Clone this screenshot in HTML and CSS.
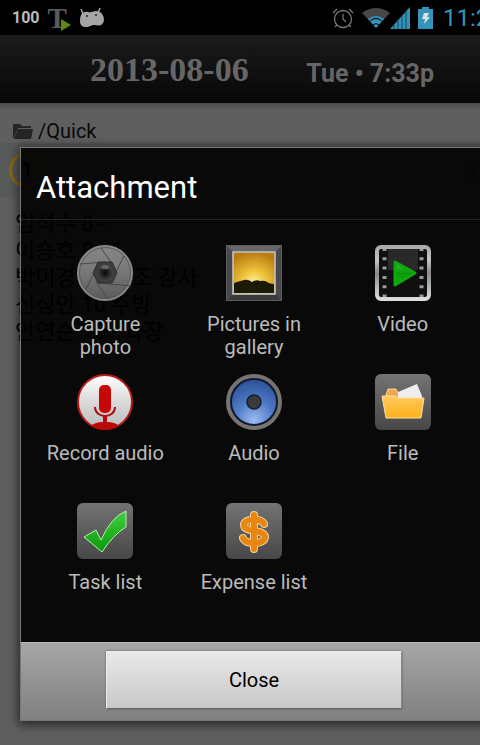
FILE: index.html
```
<!DOCTYPE html>
<html lang="en">
<head>
    <meta charset="UTF-8">
    <meta name="viewport" content="width=device-width, initial-scale=1.0">
    <title>Quick note</title>
    <link rel="stylesheet" href="styles.css">
</head>
<body>

<div class="status-bar">
    <span class="battery-percent">100</span>
    <span class="app-letter">T</span>
    <svg class="android-icon" width="26" height="20" viewBox="0 0 26 20">
        <path d="M4 6 2 1M19 5l2-5" stroke="#a5a5a5" stroke-width="1.5"/>
        <path d="M1 13C1 6 4 3 9 4c3 1 5-1 8-1 5 0 8 4 8 9-1 6-5 6-9 5-4 0-5 2-9 2-4 0-6-2-6-6z" fill="#a5a5a5"/>
        <circle cx="8" cy="8" r="1" fill="#222"/><circle cx="17" cy="7" r="1" fill="#222"/>
    </svg>
    <svg class="alarm-icon" width="22" height="22" viewBox="0 0 22 22" fill="none" stroke="#777" stroke-width="1.3">
        <circle cx="11" cy="12" r="8.5"/>
        <path d="M11 7v5l3 3M1 6l4-4M21 6l-4-4M5 18l-2 2M17 18l2 2"/>
    </svg>
    <svg class="wifi-icon" width="28" height="22" viewBox="0 0 28 22">
        <path d="M0 6Q14-4 28 6L14 21z" fill="#484848"/>
        <path d="M6 12q8-6 16 0l-8 9z" fill="#3592b8"/>
        <path d="M8 14q6-5 12 0M11 18q3-3 6 0" fill="none" stroke="#000"/>
    </svg>
    <svg class="signal-icon" width="20" height="22" viewBox="0 0 20 22">
        <path d="M0 22 20 0v22z" fill="#3592b8"/>
        <path d="M4 22v-5M8 22V12M12 22V8M16 22V3" stroke="#0f4960"/>
    </svg>
    <svg class="battery-icon" width="15" height="22" viewBox="0 0 15 22">
        <path d="M4 0h7v2h4v20H0V2h4z" fill="#3592b8"/>
        <path d="M6 6h5l-2 4h3l-6 7 1-5H4z" fill="#d5e3e8"/>
    </svg>
    <span class="clock">11:24</span>
</div>

<header class="note-header">
    <span class="note-date">2013-08-06</span>
    <span class="note-time">Tue • 7:33p</span>
</header>

<main class="note">
    <div class="note-path">
        <svg width="21" height="16" viewBox="0 0 21 16">
            <path d="M0 15V1h7l2 2h9v2H5L1 15z" fill="#252525"/>
            <path d="M5 6h15l-2 10H1z" fill="#252525"/>
        </svg>
        <span>/Quick</span>
    </div>
    <div class="note-toolbar">
        <span class="note-badge">1</span>
        <span class="note-add">+</span>
    </div>
    <div class="note-text">
        <p>임석수 8 -</p>
        <p>이승호 8 - 6</p>
        <p>박이경 10 보조 강사</p>
        <p>신성안 10 주방</p>
        <p>안연순 10 - 과장</p>
    </div>
</main>

<section class="dialog" role="dialog" aria-labelledby="dialog-title">
    <h1 class="dialog-title" id="dialog-title">Attachment</h1>

    <div class="attachments">
        <button type="button" class="attachment">
            <svg width="56" height="56" viewBox="0 0 56 56">
                <defs>
                    <linearGradient id="lens" x1="0" y1="0" x2="0" y2="1">
                        <stop offset="0" stop-color="#858585"/><stop offset=".4" stop-color="#7c7c7c"/><stop offset="1" stop-color="#5a5a5a"/>
                    </linearGradient>
                    <radialGradient id="pupil">
                        <stop offset="0" stop-color="#050505"/><stop offset=".5" stop-color="#252525"/><stop offset="1" stop-color="#444"/>
                    </radialGradient>
                </defs>
                <circle cx="28" cy="28" r="27" fill="url(#lens)" stroke="#888" stroke-width="2"/>
                <circle cx="28" cy="28" r="25.5" fill="none" stroke="#5c5c5c"/>
                <path d="M24 3 36 20M47 11 39 27M54 41 22 38M31 54 19 37M9 44 17 28M3 19 29 17" stroke="#474747" fill="none"/>
                <path d="M21 17h14l5 11-5 10H21l-5-10z" fill="#3c3c3c" stroke="#303030"/>
                <circle cx="28" cy="28" r="8" fill="url(#pupil)"/>
                <ellipse cx="28" cy="22" rx="4" ry="2" fill="#666"/>
            </svg>
            <span>Capture photo</span>
        </button>

        <button type="button" class="attachment">
            <svg width="56" height="56" viewBox="0 0 56 56">
                <defs>
                    <radialGradient id="sunset" cx=".5" cy=".75" r=".75">
                        <stop offset="0" stop-color="#fff5a0"/><stop offset=".4" stop-color="#f0c43c"/><stop offset="1" stop-color="#b87b10"/>
                    </radialGradient>
                </defs>
                <path d="M0 0h56v56H0z" fill="#48494b"/>
                <path d="M0 0h56l-6 6H6z" fill="#65676a"/>
                <path d="M0 56h56l-6-6H6z" fill="#3a3b3d"/>
                <path d="M.5.5h55v55H.5z" fill="none" stroke="#5c5d5f"/>
                <path d="M7 7h42v42H7z" fill="url(#sunset)" stroke="#c8c8c8" stroke-width="1.5"/>
                <path d="M8 38q6-2 10-3 4-1 8 2 5-3 8-1 5-1 7 1 3 2 7 2v9H8z" fill="#1d1b08"/>
            </svg>
            <span>Pictures in gallery</span>
        </button>

        <button type="button" class="attachment">
            <svg width="56" height="56" viewBox="0 0 56 56">
                <defs>
                    <linearGradient id="chrome" x1="0" y1="0" x2="0" y2="1">
                        <stop offset="0" stop-color="#aaa"/><stop offset=".25" stop-color="#c5c5c5"/><stop offset=".5" stop-color="#888"/><stop offset="1" stop-color="#ddd"/>
                    </linearGradient>
                    <linearGradient id="play" x1="0" y1="0" x2="0" y2="1">
                        <stop offset="0" stop-color="#35c335"/><stop offset=".5" stop-color="#079b07"/><stop offset="1" stop-color="#14ad14"/>
                    </linearGradient>
                </defs>
                <rect x="2" y="2" width="52" height="52" rx="4" fill="#101010" stroke="url(#chrome)" stroke-width="4"/>
                <path d="M13 4h30v21H13z" fill="#292929"/>
                <path d="M9.5 4v48M46.5 4v48" stroke="#999" stroke-width="4" stroke-dasharray="3 6.3" stroke-dashoffset="1"/>
                <path d="M20 17 40 28 20 40z" fill="url(#play)" stroke="#10a810" stroke-width="3" stroke-linejoin="round"/>
            </svg>
            <span>Video</span>
        </button>

        <button type="button" class="attachment">
            <svg width="56" height="56" viewBox="0 0 56 56">
                <defs>
                    <linearGradient id="disc" x1="0" y1="0" x2="0" y2="1">
                        <stop offset="0" stop-color="#fff"/><stop offset=".4" stop-color="#e0e0e0"/><stop offset="1" stop-color="#bbb"/>
                    </linearGradient>
                </defs>
                <circle cx="28" cy="28" r="27" fill="url(#disc)" stroke="#b61c1c" stroke-width="2"/>
                <rect x="22" y="11" width="12" height="28" rx="5" fill="#c80808"/>
                <path d="M18 33c0 12 20 12 20 0" fill="none" stroke="#a51212" stroke-width="2"/>
                <path d="M26 42h4v6q8 0 12 4-14 8-28 0 4-4 12-4z" fill="#b90909"/>
            </svg>
            <span>Record audio</span>
        </button>

        <button type="button" class="attachment">
            <svg width="56" height="56" viewBox="0 0 56 56">
                <defs>
                    <radialGradient id="cone" cx=".5" cy=".85" r=".75">
                        <stop offset="0" stop-color="#9cbcf0"/><stop offset=".5" stop-color="#4f7ac6"/><stop offset="1" stop-color="#2f549c"/>
                    </radialGradient>
                </defs>
                <circle cx="28" cy="28" r="26" fill="url(#cone)" stroke="#77736f" stroke-width="4"/>
                <circle cx="28" cy="28" r="23" fill="none" stroke="#111a2d" stroke-width="2"/>
                <circle cx="28" cy="28" r="7" fill="#3a3a3a" stroke="#171f32" stroke-width="1.5"/>
            </svg>
            <span>Audio</span>
        </button>

        <button type="button" class="attachment">
            <svg width="56" height="56" viewBox="0 0 56 56">
                <defs>
                    <linearGradient id="tile" x1="0" y1="0" x2="0" y2="1">
                        <stop offset="0" stop-color="#737373"/><stop offset="1" stop-color="#474747"/>
                    </linearGradient>
                    <linearGradient id="folder" x1="0" y1="0" x2="0" y2="1">
                        <stop offset="0" stop-color="#ffc860"/><stop offset="1" stop-color="#fbb317"/>
                    </linearGradient>
                </defs>
                <rect width="56" height="56" rx="6" fill="url(#tile)"/>
                <path d="M11 21l2-6h8l2 4h20v7H11z" fill="#efa850" stroke="#ffd699"/>
                <path d="M23 18 42 10l5 12v4H23z" fill="#eee"/>
                <path d="M7 22h13l3 2h26l-3 20H11z" fill="url(#folder)" stroke="#ffe0a0"/>
            </svg>
            <span>File</span>
        </button>

        <button type="button" class="attachment">
            <svg width="56" height="56" viewBox="0 0 56 56">
                <defs>
                    <linearGradient id="tick" x1="0" y1="0" x2="0" y2="1">
                        <stop offset="0" stop-color="#42cf42"/><stop offset="1" stop-color="#079b07"/>
                    </linearGradient>
                </defs>
                <rect width="56" height="56" rx="6" fill="url(#tile)"/>
                <path d="M7 34 19 27l5 10Q34 14 49 8v16Q36 32 25 49z" fill="url(#tick)" stroke="#b8edb8"/>
            </svg>
            <span>Task list</span>
        </button>

        <button type="button" class="attachment">
            <svg width="56" height="56" viewBox="0 0 56 56">
                <rect width="56" height="56" rx="6" fill="url(#tile)"/>
                <g fill="none" stroke-linecap="round">
                    <path d="M28 12v34M38 21c-2-6-20-6-20 1 0 8 21 4 21 12 0 8-20 8-22 1" stroke="#f8d3a2" stroke-width="8"/>
                    <path d="M28 12v34M38 21c-2-6-20-6-20 1 0 8 21 4 21 12 0 8-20 8-22 1" stroke="#e9860f" stroke-width="6"/>
                </g>
            </svg>
            <span>Expense list</span>
        </button>
    </div>

    <div class="dialog-footer">
        <button type="button" class="close-button">Close</button>
    </div>
</section>

</body>
</html>
```
FILE: styles.css
```
* {
    box-sizing: border-box;
}

body {
    position: relative;
    display: flex;
    flex-direction: column;
    min-height: 100vh;
    margin: 0;
    overflow: hidden;
    background-color: #5f5f5f;
    font-family: Roboto, "Noto Sans CJK KR", sans-serif;
}

svg {
    display: block;
    flex: none;
}

/* Status bar */
.status-bar {
    display: flex;
    align-items: center;
    height: 35px;
    padding-left: 12px;
    background-color: #000;
    white-space: nowrap;
}

.battery-percent {
    color: #bbb;
    font-size: 16px;
    font-weight: bold;
}

.app-letter {
    position: relative;
    margin-left: 8px;
    color: #5a5a5a;
    font: bold 29px/32px "Liberation Serif", serif;
}

.app-letter::after {
    content: "";
    position: absolute;
    right: -4px;
    bottom: 3px;
    border-top: 6px solid transparent;
    border-bottom: 6px solid transparent;
    border-left: 10px solid #5c8a0b;
}

.android-icon {
    margin-left: 12px;
}

.alarm-icon {
    margin-left: auto;
}

.wifi-icon {
    margin-left: 8px;
}

.battery-icon {
    margin-left: 8px;
}

.clock {
    width: 37px;
    margin-left: 10px;
    overflow: hidden;
    color: #3592b8;
    font-size: 24px;
}

/* Note header */
.note-header {
    display: flex;
    align-items: center;
    justify-content: space-between;
    height: 68px;
    padding: 2px 46px 0 90px;
    background: linear-gradient(#1b1b1b, #070707);
    color: #666;
    font-size: 25px;
    font-weight: bold;
}

.note-time {
    padding-top: 6px;
}

.note-date {
    font-family: "Liberation Serif", serif;
    font-size: 34px;
}

/* Note */
.note {
    flex: 1;
    background: linear-gradient(#4c4c4c, #5f5f5f 8px);
}

.note-path {
    display: flex;
    align-items: center;
    gap: 4px;
    height: 40px;
    padding: 15px 13px 0;
    color: #080808;
    font-size: 20px;
}

.note-toolbar {
    display: flex;
    align-items: center;
    justify-content: space-between;
    height: 54px;
    padding-left: 9px;
    background-color: #595b5b;
}

.note-badge {
    width: 36px;
    height: 36px;
    border: 3px solid #8c6a10;
    border-radius: 50%;
    font-size: 20px;
    line-height: 30px;
    text-align: center;
}

.note-add {
    color: #333;
    font-size: 28px;
    font-weight: 300;
}

.note-text {
    padding: 13px 15px;
    font-size: 22px;
    line-height: 27px;
}

.note-text p {
    margin: 0;
}

/* Attachment dialog */
.dialog {
    position: absolute;
    top: 147px;
    right: -8px;
    left: 20px;
    border: 1px solid #777;
    background-color: rgba(0, 0, 0, 0.9);
    box-shadow: 0 2px 10px 2px rgba(0, 0, 0, 0.6);
}

.dialog-title {
    height: 72px;
    margin: 0;
    padding: 0 15px;
    border-bottom: 1px solid #222;
    color: #fff;
    font-size: 31px;
    font-weight: normal;
    line-height: 80px;
}

.attachments {
    display: grid;
    grid-template-columns: repeat(3, 1fr);
    grid-auto-rows: 114px;
    gap: 15px 0;
    padding: 25px 10px;
}

.attachment {
    display: flex;
    flex-direction: column;
    align-items: center;
    gap: 12px;
    padding: 0 12px;
    border: none;
    background: none;
    color: #bbb;
    font-family: inherit;
    font-size: 20px;
    line-height: 23px;
    text-align: center;
}

.attachment span {
    max-width: 120px;
}

.dialog-footer {
    height: 78px;
    padding: 8px 85px;
    border-top: 1px solid #bbb;
    background: linear-gradient(#a6a6a6, #808080);
}

.close-button {
    display: block;
    width: 100%;
    height: 58px;
    border: 1px solid;
    border-color: #eee #888 #666 #eee;
    background: linear-gradient(#e8e8e8, #c8c8c8);
    box-shadow: 0 0 2px #555;
    color: #000;
    font-family: inherit;
    font-size: 20px;
}
```
